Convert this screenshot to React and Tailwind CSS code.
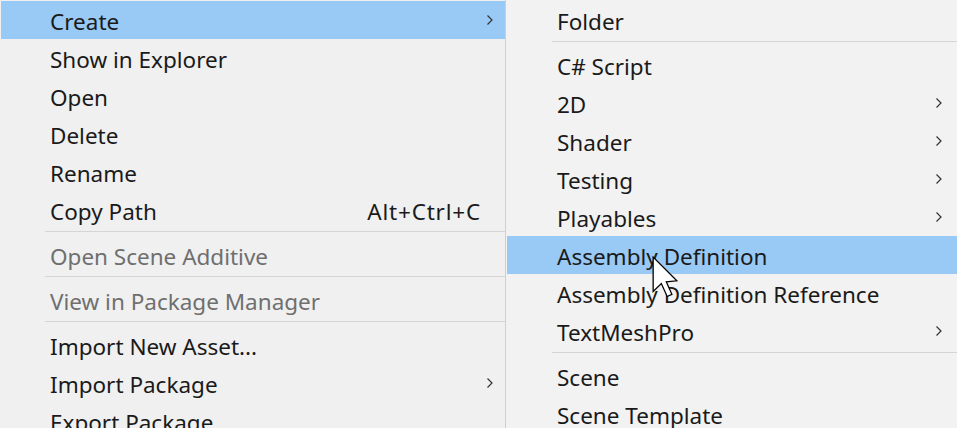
import React from "react";

const Chevron = () => (
  <svg width="8" height="12" viewBox="0 0 8 12" className="shrink-0">
    <polyline points="1.5,1.5 6,6 1.5,10.5" fill="none" stroke="#333" strokeWidth="1.2" />
  </svg>
);

const Row = ({ label, disabled, active, sub, shortcut, pl, pr }) => (
  <div
    className={`flex h-[38px] shrink-0 items-center whitespace-nowrap ${pl} ${pr} ${active ? "bg-[#99c9f5]" : ""} ${
      disabled ? "text-[#6f6f6f]" : "text-[#1a1a1a]"
    }`}
  >
    <span className="flex-1 pt-[4px]">{label}</span>
    {shortcut && <span className="pt-[4px] tracking-[0.8px]">{shortcut}</span>}
    {sub && <Chevron />}
  </div>
);

const Sep = ({ ml }) => (
  <div className={`flex h-[7px] shrink-0 flex-col ${ml}`}>
    <div className="mt-[2px] h-px bg-[#d5d5d5]" />
  </div>
);

export default function App() {
  const L = { pl: "pl-[49px]", pr: "pr-[11px]" };
  const R = { pl: "pl-[50px]", pr: "pr-[14px]" };
  return (
    <div
      className="relative flex h-[428px] w-[957px] overflow-hidden bg-[#f0f0f0] text-[22.5px] leading-[30px]"
      style={{ fontFamily: "'Noto Sans', 'Open Sans', sans-serif" }}
    >
      <div className="flex w-[506px] shrink-0 flex-col border-r border-[#cfcfcf] bg-[#f0f0f0] pt-px pl-px">
        <Row label="Create" active sub {...L} />
        <Row label="Show in Explorer" {...L} />
        <Row label="Open" {...L} />
        <Row label="Delete" {...L} />
        <Row label="Rename" {...L} />
        <Row label="Copy Path" shortcut="Alt+Ctrl+C" pl="pl-[49px]" pr="pr-[24px]" />
        <Sep ml="ml-[44px]" />
        <Row label="Open Scene Additive" disabled {...L} />
        <Sep ml="ml-[44px]" />
        <Row label="View in Package Manager" disabled {...L} />
        <Sep ml="ml-[44px]" />
        <Row label="Import New Asset..." {...L} />
        <Row label="Import Package" sub {...L} />
        <Row label="Export Package" {...L} />
      </div>
      <div className="flex flex-1 flex-col bg-[#f2f2f2] pt-px pl-[1px]">
        <Row label="Folder" {...R} />
        <Sep ml="ml-[45px]" />
        <Row label="C# Script" {...R} />
        <Row label="2D" sub {...R} />
        <Row label="Shader" sub {...R} />
        <Row label="Testing" sub {...R} />
        <Row label="Playables" sub {...R} />
        <Row label="Assembly Definition" active {...R} />
        <Row label="Assembly Definition Reference" {...R} />
        <Row label="TextMeshPro" sub {...R} />
        <Sep ml="ml-[45px]" />
        <Row label="Scene" {...R} />
        <Row label="Scene Template" {...R} />
      </div>
      <svg
        className="absolute left-[652px] top-[256px]"
        width="26"
        height="42"
        viewBox="0 0 12 19.5"
      >
        <polygon
          points="0.5,0.5 0.5,16.5 4.3,12.8 7,18.8 9.2,17.8 6.6,12 11.5,11.5"
          fill="#fff"
          stroke="#000"
          strokeWidth="0.6"
          strokeLinejoin="miter"
        />
      </svg>
    </div>
  );
}
